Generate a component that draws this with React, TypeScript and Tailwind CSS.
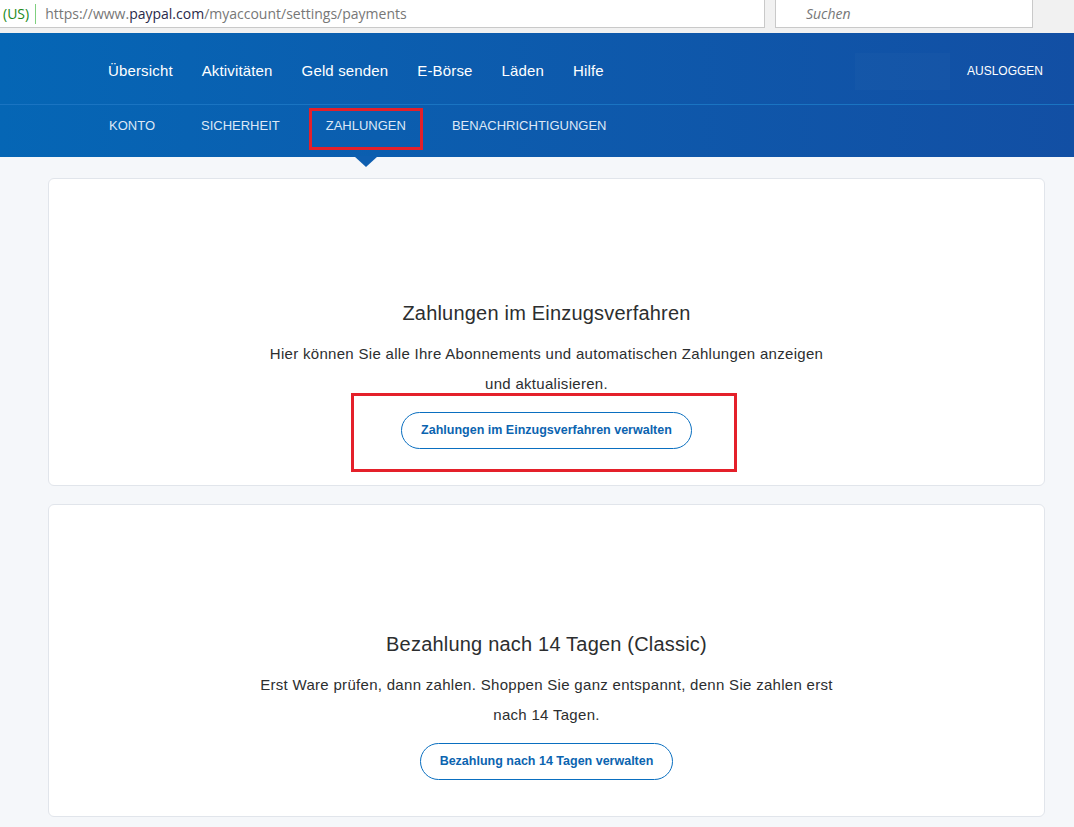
import React from 'react';

const font = { fontFamily: '"Liberation Sans", "Noto Sans", Arial, sans-serif' };

const mainNav = ['Übersicht', 'Aktivitäten', 'Geld senden', 'E-Börse', 'Läden', 'Hilfe'];
const subNav = ['KONTO', 'SICHERHEIT', 'ZAHLUNGEN', 'BENACHRICHTIGUNGEN'];

interface CardProps {
  title: string;
  lines: string[];
  button: string;
  highlight?: boolean;
  top: string;
  bottom: string;
}

const Card: React.FC<CardProps> = ({ title, lines, button, highlight, top, bottom }) => (
  <div className={`bg-white border border-[#e1e5eb] rounded-[6px] flex flex-col items-center ${top} ${bottom}`}>
    <h2 className="text-[20px] leading-[24px] text-[#2c2e2f] tracking-[0.2px]">{title}</h2>
    <div className="mt-[14px] text-center text-[15px] leading-[30px] text-[#2c2e2f] tracking-[0.3px]">
      {lines.map((l) => (
        <p key={l}>{l}</p>
      ))}
    </div>
    <div className="relative mt-[13px]">
      {/* Annotation box */}
      {highlight && (
        <div className="absolute left-[-50px] right-[-45px] top-[-19px] bottom-[-23px] border-[3px] border-[#e4202a]" />
      )}
      <button className="relative h-[37px] px-[19px] rounded-full border border-[#0a6fc0] text-[12.5px] font-bold text-[#0b64b0] bg-white">
        {button}
      </button>
    </div>
  </div>
);

export default function App() {
  return (
    <div className="min-h-[827px] bg-[#f5f7fa]" style={font}>
      {/* Browser chrome */}
      <div className="h-[33px] bg-[#f1f1f1] flex items-start">
        <div className="w-[765px] h-[28px] bg-white border-b border-r border-[#c9c9c9] flex items-center text-[14px]" style={{ fontFamily: '"Open Sans", "Noto Sans", sans-serif' }}>
          <span className="pl-[3px] pr-[6px] text-[#1a8a1a]">(US)</span>
          <span className="w-px h-[20px] bg-[#7fd07f]" />
          <span className="pl-[9px] text-[#777]">
            https://www.<span className="text-[#2a2a4a]">paypal.com</span>/myaccount/settings/payments
          </span>
        </div>
        <div className="ml-[10px] w-[258px] h-[28px] bg-white border border-t-0 border-[#c9c9c9] flex items-center pl-[30px] text-[14px] italic text-[#777]" style={{ fontFamily: '"Open Sans", "Noto Sans", sans-serif' }}>
          Suchen
        </div>
      </div>

      {/* Header */}
      <div className="relative bg-gradient-to-r from-[#0566b5] to-[#124fa4]">
        <div className="h-[72px] flex items-center pt-[5px] pl-[108px] pr-[31px] border-b border-[#1a74c2]">
          <div className="flex gap-[29px] text-[15px] text-white tracking-[0.15px]">
            {mainNav.map((n) => (
              <span key={n}>{n}</span>
            ))}
          </div>
          <div className="ml-auto w-[95px] h-[37px] bg-white/[0.02] mr-[17px]" />
          <span className="text-[12px] text-white font-medium">AUSLOGGEN</span>
        </div>
        <div className="h-[52px] flex items-start pt-[11px] pl-[109px] gap-[46px] text-[13px] text-[#dde8f6]">
          {subNav.map((n) => (
            <span key={n} className="relative">
              {n}
              {n === 'ZAHLUNGEN' && (
                <>
                  <span className="absolute left-[-17px] right-[-17px] top-[-8px] bottom-[-14px] border-[3px] border-[#e4202a]" />
                  <span className="absolute left-[28px] top-[40px] w-0 h-0 border-l-[12px] border-r-[12px] border-t-[11px] border-l-transparent border-r-transparent border-t-[#0d5eb0]" />
                </>
              )}
            </span>
          ))}
        </div>
      </div>

      {/* Content */}
      <div className="pl-[48px] pr-[29px] pt-[21px] flex flex-col gap-[18px] pb-[9px]">
        <Card
          title="Zahlungen im Einzugsverfahren"
          lines={['Hier können Sie alle Ihre Abonnements und automatischen Zahlungen anzeigen', 'und aktualisieren.']}
          button="Zahlungen im Einzugsverfahren verwalten"
          highlight
          top="pt-[122px]"
          bottom="pb-[36px]"
        />
        <Card
          title="Bezahlung nach 14 Tagen (Classic)"
          lines={['Erst Ware prüfen, dann zahlen. Shoppen Sie ganz entspannt, denn Sie zahlen erst', 'nach 14 Tagen.']}
          button="Bezahlung nach 14 Tagen verwalten"
          top="pt-[127px]"
          bottom="pb-[36px]"
        />
      </div>
    </div>
  );
}
